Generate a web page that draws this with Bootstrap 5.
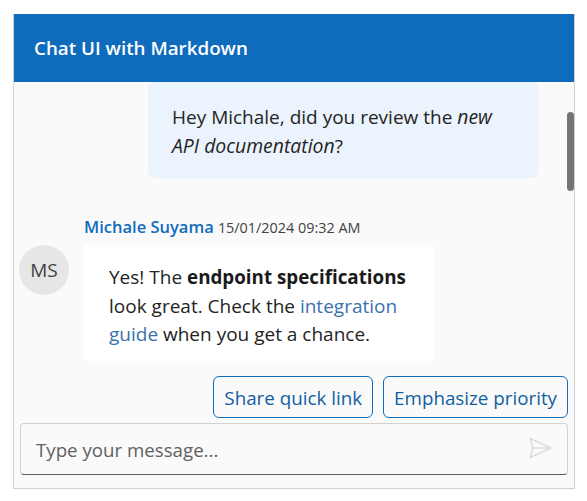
<!DOCTYPE html>
<html lang="en">
<head>
<meta charset="utf-8">
<title>Chat UI with Markdown</title>
<link href="https://cdn.jsdelivr.net/npm/bootstrap@5.3.0/dist/css/bootstrap.min.css" rel="stylesheet">
<style>
html,body{height:100%;background:#fff;}
body{font-family:"Open Sans","Noto Sans",sans-serif;color:#242424;overflow:hidden;padding:14px 12px 12px 13px;}
.chat-shell{height:475px;width:562px;border:1px solid #d1d1d1;border-top:0;background:#fafafa;position:relative;}
.chat-head{height:68px;flex:none;background:#0f6cbd;color:#fff;font-size:18.8px;font-weight:600;padding-left:20px;}
.chat-list{height:294px;flex:none;overflow:hidden;}
.bubble-out{margin-left:134px;width:390px;height:96px;background:#ebf3fc;border-radius:6px;padding:21px 24px;font-size:19px;line-height:28.5px;}
.bubble-out em{font-size:19.4px;}
.meta-row{margin:36px 0 0 70px;height:31px;line-height:26px;white-space:nowrap;}
.meta-name{font-size:16.5px;font-weight:600;color:#0f6cbd;}
.meta-time{font-size:14.4px;color:#424242;}
.msg-row{padding-left:5px;gap:15px;}
.avatar-ms{width:50px;height:50px;background:#e6e6e6;color:#424242;font-size:19px;flex:none;}
.bubble-in{width:350px;height:116px;background:#fff;border-radius:4px;padding:18px 25px;font-size:19px;line-height:28.5px;}
.bubble-in a{color:#3a72ac;text-decoration:none;}
.bubble-in b{font-weight:700;font-size:18.8px;color:#1a1a1a;}
.quick-row{height:42px;flex:none;padding-right:6px;gap:10px;}
.quick-btn{height:42px;border:1px solid #0f6cbd;border-radius:6px;color:#115ea3;background:#fafafa;font-size:18.8px;padding:2px 10px 0;white-space:nowrap;}
.input-box{height:52px;flex:none;margin:5px 6px 0 6px;border:1px solid #d1d1d1;border-bottom:1px solid #616161;border-radius:4px;background:#fafafa;padding:0 15px;}
.input-box input{border:0;outline:0;background:transparent;font-size:18.7px;color:#616161;flex:1;min-width:0;padding:2px 0 0;}
.input-box input::placeholder{color:#616161;opacity:1;}
.input-box svg{margin-top:-2px;}
.thumb{position:absolute;right:0;top:98px;width:7px;height:79px;border-radius:4px;background:#757575;}
</style>
</head>
<body>
<div class="chat-shell d-flex flex-column">
  <div class="chat-head d-flex align-items-center">Chat UI with Markdown</div>
  <div class="chat-list">
    <div class="bubble-out">Hey Michale, did you review the <em>new API documentation</em>?</div>
    <div class="meta-row"><span class="meta-name">Michale Suyama</span> <span class="meta-time">15/01/2024 09:32 AM</span></div>
    <div class="msg-row d-flex align-items-start">
      <div class="avatar-ms rounded-circle d-flex align-items-center justify-content-center">MS</div>
      <div class="bubble-in">Yes! The <b>endpoint specifications</b> look great. Check the <a href="#">integration guide</a> when you get a chance.</div>
    </div>
  </div>
  <div class="quick-row d-flex justify-content-end">
    <button type="button" class="btn quick-btn">Share quick link</button>
    <button type="button" class="btn quick-btn">Emphasize priority</button>
  </div>
  <div class="input-box d-flex align-items-center">
    <input type="text" placeholder="Type your message..." aria-label="Type your message">
    <svg width="24" height="24" viewBox="0 0 24 24" fill="none" stroke="#dcdcdc" stroke-width="1.4" stroke-linejoin="round" aria-hidden="true"><path d="M2 2.500 23 12 2 21.500 5 12Z"/><path d="M5 12H23"/></svg>
  </div>
  <div class="thumb"></div>
</div>
</body>
</html>
